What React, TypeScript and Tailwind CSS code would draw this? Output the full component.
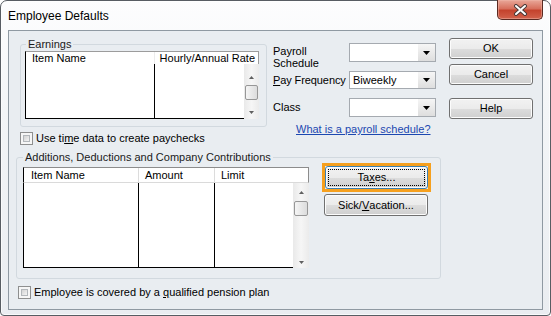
import React from 'react';

const btnFace =
  'bg-[linear-gradient(to_bottom,#f2f2f2_0%,#ebebeb_50%,#dddddd_50%,#cfcfcf_100%)] shadow-[inset_0_0_0_1px_#fcfcfc]';

const Checkbox = () => (
  <div className="w-[13px] h-[13px] shrink-0 border border-[#8e8f8f] bg-[#f6f6f6] p-[2px]">
    <div className="w-full h-full border border-[#b3b7bb] bg-gradient-to-br from-[#d3d3d3] to-[#f4f4f4]" />
  </div>
);

const Arrow = ({ up = false }: { up?: boolean }) => (
  <svg width="5" height="3" viewBox="0 0 5 3" className="block">
    <path d={up ? 'M0 3h5L2.5 0z' : 'M0 0h5L2.5 3z'} fill="#606060" />
  </svg>
);

const Dropdown = ({ value = '', h }: { value?: string; h: string }) => (
  <div className={`flex w-[87px] border border-[#a5aab0] bg-white ${h}`}>
    <div className="flex-1 pl-[3px] flex items-center text-[11px] leading-none">{value}</div>
    <div className="w-[17px] flex items-center justify-center bg-gradient-to-b from-[#f6f6f6] to-[#dedede]">
      <svg width="7" height="4" viewBox="0 0 7 4" className="block">
        <path d="M0 0h7L3.5 4z" fill="#000" />
      </svg>
    </div>
  </div>
);

const Button = ({ children, className = '' }: { children: React.ReactNode; className?: string }) => (
  <div
    className={`flex items-center justify-center rounded-[3px] border border-[#707070] text-[11px] leading-none text-black ${btnFace} ${className}`}
  >
    {children}
  </div>
);

export default function App() {
  return (
    <div className="w-[551px] h-[316px] bg-white font-['Liberation_Sans',Arial,sans-serif] text-black">
      {/* Window frame */}
      <div className="w-full h-full flex flex-col px-[7px] pb-[5px] rounded-t-[7px] rounded-b-[4px] border border-[#585d63] bg-[linear-gradient(to_bottom,#fdfdfe_0%,#f3f5f7_35%,#eaedf1_100%)] shadow-[inset_0_0_0_1px_#ffffffb0]">
        {/* Title bar */}
        <div className="h-[29px] flex items-start justify-between">
          <div className="pt-[8px] text-[12px] leading-[15px]">Employee Defaults</div>
          <div className="-mt-px w-[46px] h-[20px] flex items-center justify-center rounded-b-[5px] border border-t-0 border-[#5a2a22] bg-[linear-gradient(to_bottom,#e9a899_0%,#d7705d_45%,#c4432d_55%,#d2624c_100%)] shadow-[inset_0_0_0_1px_#f0b8aa80]">
            <svg width="15" height="12" viewBox="0 0 15 12" className="block">
              <path d="M3 2L12 10M12 2L3 10" stroke="#4a3a38" strokeWidth="4" strokeLinecap="round" />
              <path d="M3 2L12 10M12 2L3 10" stroke="#fff" strokeWidth="2" strokeLinecap="round" />
            </svg>
          </div>
        </div>

        {/* Client area */}
        <div className="flex-1 flex border border-[#8f99a2] bg-[#e9edf1] text-[11px]">
          {/* Left column */}
          <div className="flex flex-col">
            <div className="flex items-start h-[96px]">
              {/* Earnings */}
              <fieldset className="ml-[11px] mt-[7px] w-[247px] rounded-[3px] border border-[#d2d9df] pb-[7px]">
                <legend className="ml-[5px] px-[2px] leading-[12px] text-[#1a1a1a]">Earnings</legend>
                <div className="mt-px ml-[4px] w-[234px]">
                  <div className="flex h-[13px] bg-white border-t border-r border-l border-t-[#9c9c9c] border-r-[#9c9c9c] border-l-black leading-[12px]">
                    <div className="w-[129px] pl-[6px] border-r border-[#ececec]">Item Name</div>
                    <div className="flex-1 text-right pr-[3px]">Hourly/Annual Rate</div>
                  </div>
                  <div className="flex h-[55px]">
                    <div className="flex-1 flex bg-white border-l border-b border-black">
                      <div className="w-[129px] border-r border-black" />
                      <div className="flex-1" />
                    </div>
                    <div className="w-[15px] flex flex-col items-center bg-gradient-to-r from-[#e9e9e9] via-[#f6f6f6] to-[#ebebeb]">
                      <div className="mt-[12px]"><Arrow up /></div>
                      <div className="mt-[6px] w-[13px] h-[15px] rounded-[2px] border border-[#979797] bg-gradient-to-r from-[#f5f5f5] to-[#dcdcdc]" />
                      <div className="mt-[11px]"><Arrow /></div>
                    </div>
                  </div>
                </div>
              </fieldset>

              {/* Payroll fields */}
              <div className="ml-[6px] mt-[12px] flex flex-col">
                <div className="flex items-start h-[26px]">
                  <div className="w-[76px] pt-[2px] leading-[12px]">Payroll<br />Schedule</div>
                  <Dropdown h="h-[19px]" />
                </div>
                <div className="mt-[2px] flex items-center h-[18px]">
                  <div className="w-[76px] leading-[13px] tracking-[-0.1px]">
                    <span className="underline underline-offset-[1px]">P</span>ay Frequency
                  </div>
                  <Dropdown h="h-[18px]" value="Biweekly" />
                </div>
                <div className="mt-[9px] flex items-center h-[19px]">
                  <div className="w-[76px] leading-[13px]">Class</div>
                  <Dropdown h="h-[19px]" />
                </div>
                <div className="mt-[6px] pl-[23px] leading-[13px] text-[#1c48b0] underline underline-offset-[1px]">
                  What is a payroll schedule?
                </div>
              </div>
            </div>

            <div className="mt-[5px] ml-[11px] flex items-center gap-[3px] leading-[13px]">
              <Checkbox />
              <span>
                Use ti<span className="underline underline-offset-[1px]">m</span>e data to create paychecks
              </span>
            </div>

            {/* Additions, Deductions and Company Contributions */}
            <fieldset className="ml-[7px] mt-[6px] w-[425px] rounded-[3px] border border-[#d2d9df] pb-[10px]">
              <legend className="ml-[6px] px-[2px] leading-[12px] text-[#1a1a1a]">
                Additions, Deductions and Company Contributions
              </legend>
              <div className="flex items-start">
                <div className="ml-[6px] mt-[4px] w-[286px]">
                  <div className="flex h-[16px] items-center bg-white border-t border-r border-l border-b border-t-[#8c8c8c] border-r-[#8c8c8c] border-l-black border-b-[#dadada] leading-[13px]">
                    <div className="w-[115px] h-full flex items-center pl-[7px] border-r border-[#dcdcdc]">Item Name</div>
                    <div className="w-[76px] h-full flex items-center pl-[6px] border-r border-[#dcdcdc]">Amount</div>
                    <div className="flex-1 h-full flex items-center pl-[6px]">Limit</div>
                  </div>
                  <div className="flex h-[85px]">
                    <div className="flex-1 flex bg-white border-l border-b border-black">
                      <div className="w-[115px] border-r border-black" />
                      <div className="w-[76px] border-r border-black" />
                      <div className="flex-1" />
                    </div>
                    <div className="w-[16px] flex flex-col items-center bg-gradient-to-r from-[#e9e9e9] via-[#f6f6f6] to-[#ebebeb]">
                      <div className="mt-[8px]"><Arrow up /></div>
                      <div className="mt-[7px] w-[14px] h-[15px] rounded-[2px] border border-[#979797] bg-gradient-to-r from-[#f5f5f5] to-[#dcdcdc]" />
                      <div className="mt-[45px]"><Arrow /></div>
                    </div>
                  </div>
                </div>

                <div className="ml-[13px] flex flex-col">
                  <div className="w-[109px] h-[29px] border-[3px] border-[#f6a01e]">
                    <Button className="w-full h-full !border-[#3c7fb1] outline-1 outline-dotted outline-black outline-offset-[-4px]">
                      Ta<span className="underline underline-offset-[1px]">x</span>es...
                    </Button>
                  </div>
                  <Button className="ml-[2px] mt-[2px] w-[104px] h-[22px]">
                    Sick/<span className="underline underline-offset-[1px]">V</span>acation...
                  </Button>
                </div>
              </div>
            </fieldset>

            <div className="mt-[7px] ml-[9px] flex items-center gap-[3px] leading-[13px]">
              <Checkbox />
              <span>
                Employee is covered by a <span className="underline underline-offset-[1px]">q</span>ualified pension plan
              </span>
            </div>
          </div>

          {/* Right buttons */}
          <div className="ml-auto mr-[9px] flex flex-col">
            <Button className="mt-[7px] w-[84px] h-[21px]">OK</Button>
            <Button className="mt-[5px] w-[84px] h-[21px]">Cancel</Button>
            <Button className="mt-[13px] w-[84px] h-[21px]">Help</Button>
          </div>
        </div>
      </div>
    </div>
  );
}
